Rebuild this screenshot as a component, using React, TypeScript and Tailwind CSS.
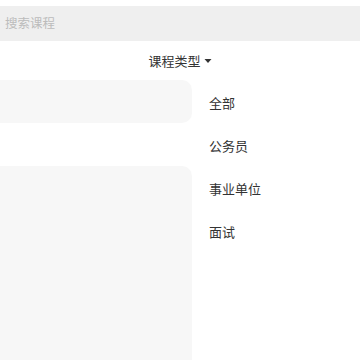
const types = ['全部', '公务员', '事业单位', '面试'];

const App = () => {
    return (
        <div
            className="w-[360px] h-[360px] overflow-hidden bg-white flex flex-col"
            style={{ fontFamily: '"Noto Sans CJK SC", "Noto Sans", sans-serif' }}
        >
            <div className="pt-[6px]">
                <div className="h-[35px] bg-[#efefef] flex items-center px-[5px] text-[12.5px] text-[#bcbcbc]">
                    搜索课程
                </div>
            </div>
            <div className="h-[39px] flex items-center justify-center text-[13px] text-[#333]">
                <span>课程类型</span>
                <svg width="8" height="6" viewBox="0 0 8 6" className="ml-[3px]">
                    <path d="M0.5 1h7L4 5z" fill="#333" />
                </svg>
            </div>
            <div className="flex flex-1 min-h-0">
                <div className="w-[192px] flex flex-col gap-[43px]">
                    <div className="h-[43px] bg-[#f7f7f7] rounded-r-[10px]" />
                    <div className="flex-1 bg-[#f7f7f7] rounded-tr-[10px]" />
                </div>
                <div className="flex-1 flex flex-col pl-[17px] pt-[14px]">
                    {types.map((t) => (
                        <div
                            key={t}
                            className="h-[43px] flex items-start text-[13px] leading-[18px] text-[#333]"
                        >
                            {t}
                        </div>
                    ))}
                </div>
            </div>
        </div>
    );
};

export default App;
